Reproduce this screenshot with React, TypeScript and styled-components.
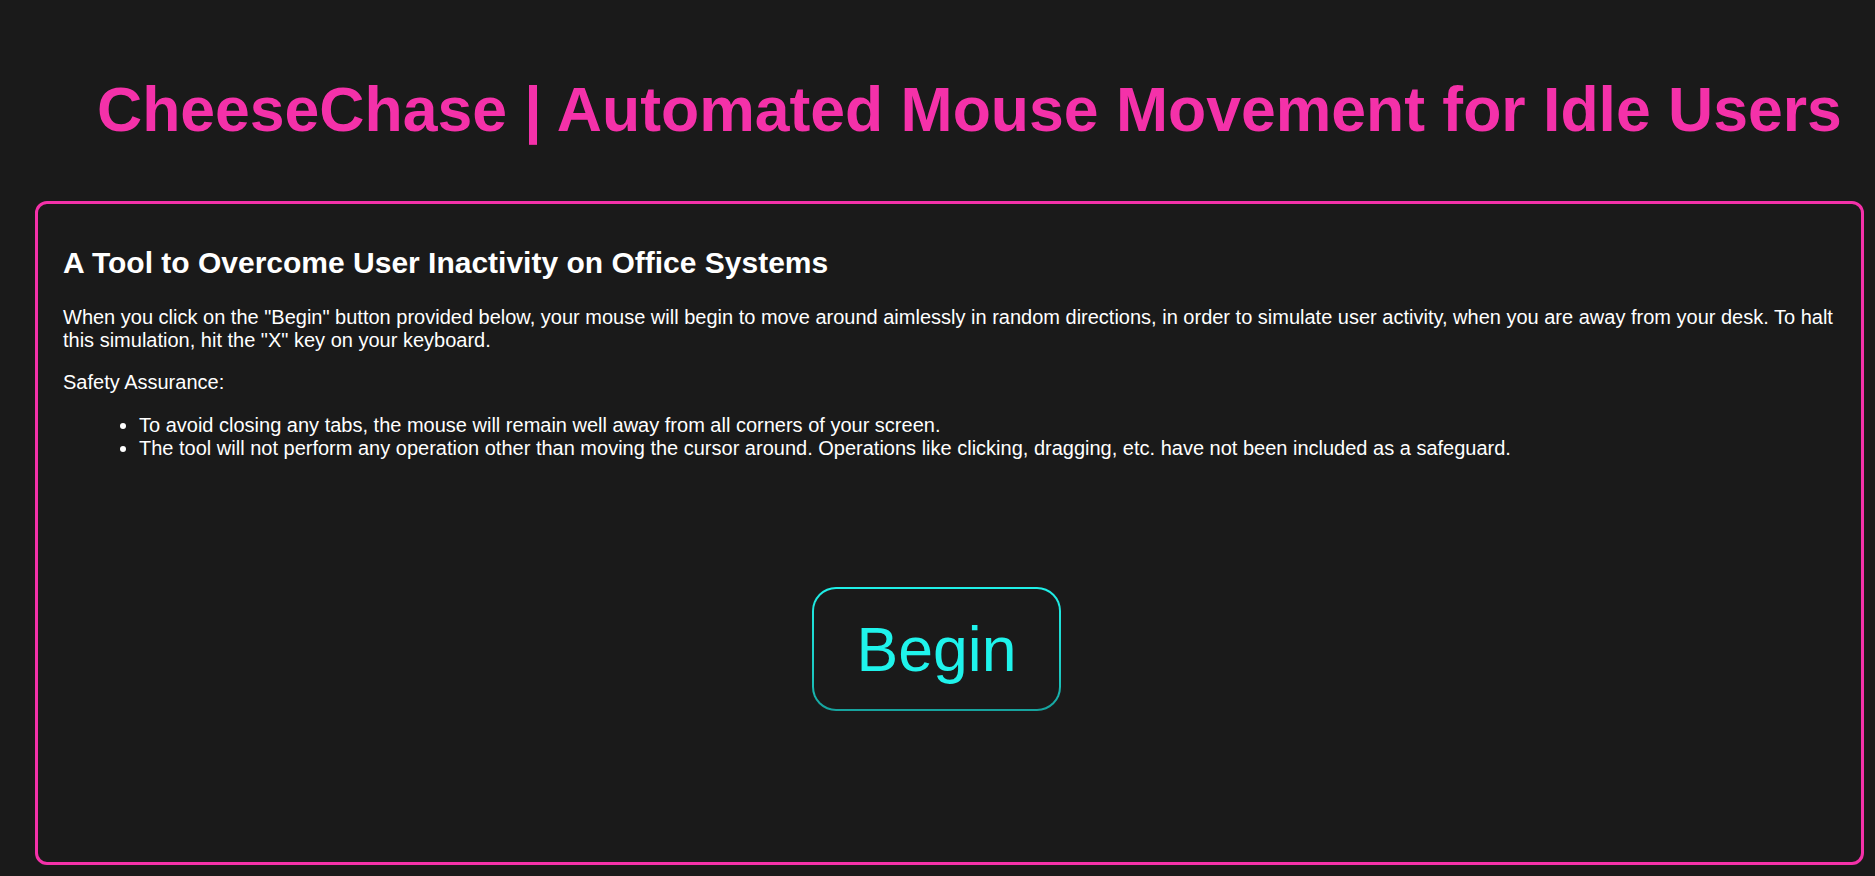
import React from "react";
import styled, { createGlobalStyle } from "styled-components";

const GlobalStyle = createGlobalStyle`
  html, body {
    margin: 0;
    padding: 0;
    background: #1a1a1a;
  }
  body {
    font-family: "Liberation Sans", Arial, sans-serif;
    color: #ffffff;
  }
  * { box-sizing: border-box; }
`;

const Page = styled.div`
  min-height: 876px;
  background: #1a1a1a;
  padding-top: 73px;
`;

const Title = styled.h1`
  margin: 0;
  padding-left: 97px;
  font-size: 62.5px;
  font-weight: 700;
  line-height: normal;
  color: #f431a9;
  white-space: nowrap;
`;

const Panel = styled.section`
  margin: 56px 0 0 35px;
  width: 1829px;
  height: 664px;
  border: 3px solid #f431a9;
  border-radius: 12px;
  padding: 42px 25px 0 25px;
`;

const Heading = styled.h2`
  margin: 0 0 26px;
  font-size: 30px;
  font-weight: 700;
  line-height: normal;
`;

const Para = styled.p<{ $gap: number }>`
  margin: 0 0 ${(p) => p.$gap}px;
  font-size: 20px;
  line-height: 22.5px;
`;

const List = styled.ul`
  margin: 0;
  padding-left: 76px;
  font-size: 20px;
  line-height: 23px;
`;

const ButtonRow = styled.div`
  display: flex;
  justify-content: center;
  margin-top: 127px;
  padding-right: 26px;
`;

const BeginButton = styled.button`
  width: 249px;
  height: 124px;
  background: transparent;
  border: 2px solid transparent;
  border-radius: 24px;
  background-image: linear-gradient(#1a1a1a, #1a1a1a),
    linear-gradient(180deg, #1ff0e8 0%, #1bc9c2 70%, #16a29d 100%);
  background-origin: border-box;
  background-clip: padding-box, border-box;
  color: #1ff3eb;
  font-family: "Liberation Sans", Arial, sans-serif;
  font-size: 62.5px;
  line-height: normal;
  cursor: pointer;
  padding: 0;
`;

export default function App() {
  return (
    <>
      <GlobalStyle />
      <Page>
        <Title>CheeseChase | Automated Mouse Movement for Idle Users</Title>
        <Panel>
          <Heading>A Tool to Overcome User Inactivity on Office Systems</Heading>
          <Para $gap={20}>
            When you click on the "Begin" button provided below, your mouse will begin to move around aimlessly in
            random directions, in order to simulate user activity, when you are away from your desk. To halt this
            simulation, hit the "X" key on your keyboard.
          </Para>
          <Para $gap={20}>Safety Assurance:</Para>
          <List>
            <li>To avoid closing any tabs, the mouse will remain well away from all corners of your screen.</li>
            <li>
              The tool will not perform any operation other than moving the cursor around. Operations like clicking,
              dragging, etc. have not been included as a safeguard.
            </li>
          </List>
          <ButtonRow>
            <BeginButton type="button">Begin</BeginButton>
          </ButtonRow>
        </Panel>
      </Page>
    </>
  );
}
